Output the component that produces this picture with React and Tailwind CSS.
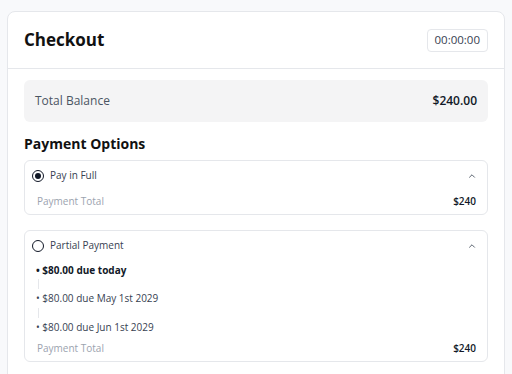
import React from 'react';

const font = { fontFamily: '"Open Sans", "DejaVu Sans", sans-serif' };

function Radio({ checked }) {
    return (
        <span className="flex h-[12px] w-[12px] items-center justify-center rounded-full border-[1.5px] border-[#111827]">
            {checked && <span className="h-[6px] w-[6px] rounded-full bg-[#111827]" />}
        </span>
    );
}

function Chevron() {
    return (
        <svg width="10" height="10" viewBox="0 0 24 24" fill="none" stroke="#4b5563" strokeWidth="2.2" strokeLinecap="round" strokeLinejoin="round">
            <path d="M6 15l6-6 6 6" />
        </svg>
    );
}

function Option({ label, checked, children }) {
    return (
        <div className="rounded-md border border-[#e5e7eb] bg-white">
            <div className="flex h-[28px] items-center justify-between pl-[7px] pr-[10px] pt-[1px]">
                <div className="flex items-center gap-[6px]">
                    <Radio checked={checked} />
                    <span className="text-[10px] text-[#374151]">{label}</span>
                </div>
                <Chevron />
            </div>
            {children}
            <div className="flex h-[25px] items-center justify-between pl-[12px] pr-[11px] pb-[1px]">
                <span className="text-[10px] text-[#9ca3af]">Payment Total</span>
                <span className="text-[10px] font-semibold text-[#111827]">$240</span>
            </div>
        </div>
    );
}

export default function App() {
    return (
        <div className="min-h-screen bg-[#f8f9fb] px-[7px] pt-[11px]" style={font}>
            <div className="rounded-t-lg border border-[#e5e7eb] bg-white pb-[20px]">
                <div className="flex h-[57px] items-center justify-between border-b border-[#e5e7eb] px-[16px]">
                    <h1 className="text-[17px] font-bold text-[#111]">Checkout</h1>
                    <div className="flex h-[23px] items-center rounded border border-[#e5e7eb] px-[7px] text-[11.5px] text-[#374151]">00:00:00</div>
                </div>
                <div className="px-[16px] pt-[11px]">
                    <div className="flex h-[42px] items-center justify-between rounded-md bg-[#f4f4f5] px-[11px]">
                        <span className="text-[12px] text-[#4b5563]">Total Balance</span>
                        <span className="text-[12px] font-semibold text-[#111827]">$240.00</span>
                    </div>
                    <h2 className="mt-[12px] text-[14px] font-bold leading-[20px] text-[#111]">Payment Options</h2>
                    <div className="mt-[6px]">
                        <Option label="Pay in Full" checked />
                    </div>
                    <div className="mt-[15px]">
                        <Option label="Partial Payment">
                            <div className="flex flex-col pl-[11px] pt-[4px] text-[10px] text-[#374151]">
                                <span className="font-bold leading-[14px] text-[#111827]">• $80.00 due today</span>
                                <span className="my-[2px] ml-[2px] h-[10px] w-px bg-[#e5e7eb]" />
                                <span className="leading-[14px]">• $80.00 due May 1st 2029</span>
                                <span className="my-[2.5px] ml-[2px] h-[10px] w-px bg-[#e5e7eb]" />
                                <span className="leading-[14px]">• $80.00 due Jun 1st 2029</span>
                            </div>
                            <div className="h-[2px]" />
                        </Option>
                    </div>
                </div>
            </div>
        </div>
    );
}
